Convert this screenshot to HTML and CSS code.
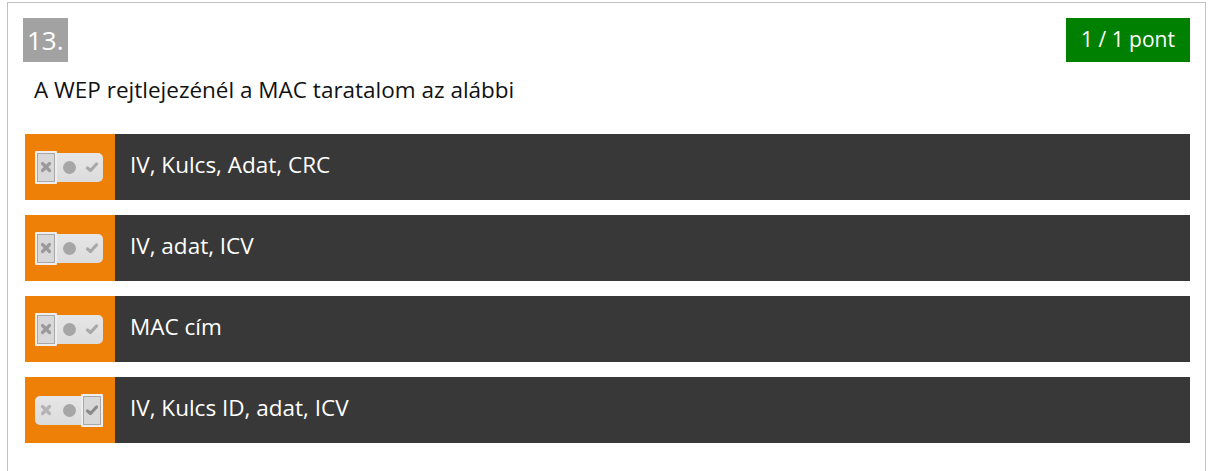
FILE: index.html
```html
<!DOCTYPE html>
<html>
<head>
<meta charset="utf-8">
<link rel="stylesheet" href="styles.css">
</head>
<body>
<div class="question">
  <div class="head">
    <span class="num">13.</span>
    <span class="score">1 / 1 pont</span>
  </div>
  <div class="qtext">A WEP rejtlejezénél a MAC taratalom az alábbi</div>
  <div class="answers">
    <div class="answer">
      <div class="mark">
        <div class="pill sel-x">
          <span class="slot x"><svg viewBox="0 0 12 12" width="12" height="12"><path d="M2.5 2.5 L9.5 9.5 M9.5 2.5 L2.5 9.5" stroke="#9a9a9a" stroke-width="3.2" stroke-linecap="round"/></svg></span>
          <span class="slot dot"><span class="circle"></span></span>
          <span class="slot chk"><svg viewBox="0 0 14 12" width="14" height="12"><path d="M2.5 7 L5.5 9.5 L11.5 3" stroke="#a8a8a8" stroke-width="3.2" fill="none" stroke-linecap="round" stroke-linejoin="round"/></svg></span>
        </div>
      </div>
      <div class="label">IV, Kulcs, Adat, CRC</div>
    </div>
    <div class="answer">
      <div class="mark">
        <div class="pill sel-x">
          <span class="slot x"><svg viewBox="0 0 12 12" width="12" height="12"><path d="M2.5 2.5 L9.5 9.5 M9.5 2.5 L2.5 9.5" stroke="#9a9a9a" stroke-width="3.2" stroke-linecap="round"/></svg></span>
          <span class="slot dot"><span class="circle"></span></span>
          <span class="slot chk"><svg viewBox="0 0 14 12" width="14" height="12"><path d="M2.5 7 L5.5 9.5 L11.5 3" stroke="#a8a8a8" stroke-width="3.2" fill="none" stroke-linecap="round" stroke-linejoin="round"/></svg></span>
        </div>
      </div>
      <div class="label">IV, adat, ICV</div>
    </div>
    <div class="answer">
      <div class="mark">
        <div class="pill sel-x">
          <span class="slot x"><svg viewBox="0 0 12 12" width="12" height="12"><path d="M2.5 2.5 L9.5 9.5 M9.5 2.5 L2.5 9.5" stroke="#9a9a9a" stroke-width="3.2" stroke-linecap="round"/></svg></span>
          <span class="slot dot"><span class="circle"></span></span>
          <span class="slot chk"><svg viewBox="0 0 14 12" width="14" height="12"><path d="M2.5 7 L5.5 9.5 L11.5 3" stroke="#a8a8a8" stroke-width="3.2" fill="none" stroke-linecap="round" stroke-linejoin="round"/></svg></span>
        </div>
      </div>
      <div class="label">MAC cím</div>
    </div>
    <div class="answer">
      <div class="mark">
        <div class="pill sel-chk">
          <span class="slot x"><svg viewBox="0 0 12 12" width="12" height="12"><path d="M2.5 2.5 L9.5 9.5 M9.5 2.5 L2.5 9.5" stroke="#b4b4b4" stroke-width="3.2" stroke-linecap="round"/></svg></span>
          <span class="slot dot"><span class="circle"></span></span>
          <span class="slot chk"><svg viewBox="0 0 14 12" width="14" height="12"><path d="M2.5 7 L5.5 9.5 L11.5 3" stroke="#8a8a8a" stroke-width="3.2" fill="none" stroke-linecap="round" stroke-linejoin="round"/></svg></span>
        </div>
      </div>
      <div class="label">IV, Kulcs ID, adat, ICV</div>
    </div>
  </div>
</div>
</body>
</html>
```
FILE: styles.css
```css
html, body {
  margin: 0;
  padding: 0;
  background: #fff;
}
body {
  font-family: "Open Sans", "Noto Sans", sans-serif;
  padding: 2px 5px 0 7px;
}
.question {
  border: 1px solid #c2c2c2;
  border-bottom: none;
  padding: 15px 15px 28px 15px;
  min-height: 480px;
  box-sizing: border-box;
}
.head {
  display: flex;
  justify-content: space-between;
  align-items: flex-start;
}
.num {
  background: #a2a2a2;
  color: #fff;
  font-size: 26px;
  line-height: 44px;
  height: 44px;
  padding: 0 3px 0 4px;
  width: 38px;
}
.score {
  background: #008000;
  color: #fff;
  font-size: 21px;
  height: 44px;
  line-height: 42px;
  width: 124px;
  text-align: center;
}
.qtext {
  font-size: 22.5px;
  color: #111;
  padding: 13px 0 0 11px;
  line-height: 30px;
}
.answers {
  margin-top: 29px;
  padding-left: 2px;
  display: flex;
  flex-direction: column;
  gap: 15px;
}
.answer {
  display: flex;
  height: 66px;
  background: #383838;
}
.mark {
  width: 90px;
  background: #ee8008;
  display: flex;
  align-items: center;
  justify-content: center;
  flex: none;
}
.pill {
  position: relative;
  width: 68px;
  height: 29px;
  border-radius: 5px;
  background: linear-gradient(#e6e6e6, #dcdcdc);
  display: flex;
  align-items: center;
  margin-left: -2px;
}
.slot {
  width: 22px;
  height: 29px;
  display: flex;
  align-items: center;
  justify-content: center;
  box-sizing: border-box;
}
.slot.dot { width: 24px; }
.circle {
  width: 13px;
  height: 13px;
  border-radius: 50%;
  background: #a6a6a6;
}
.sel-x .slot.x,
.sel-chk .slot.chk {
  height: 33px;
  border: 2px solid #eeeeee;
  outline: 1px solid #a8a8a8;
  outline-offset: -3px;
  background: #d8d8d8;
  border-radius: 1px;
}
.label {
  color: #fff;
  font-size: 22.5px;
  display: flex;
  align-items: center;
  padding-left: 15px;
  padding-bottom: 5px;
}
```
